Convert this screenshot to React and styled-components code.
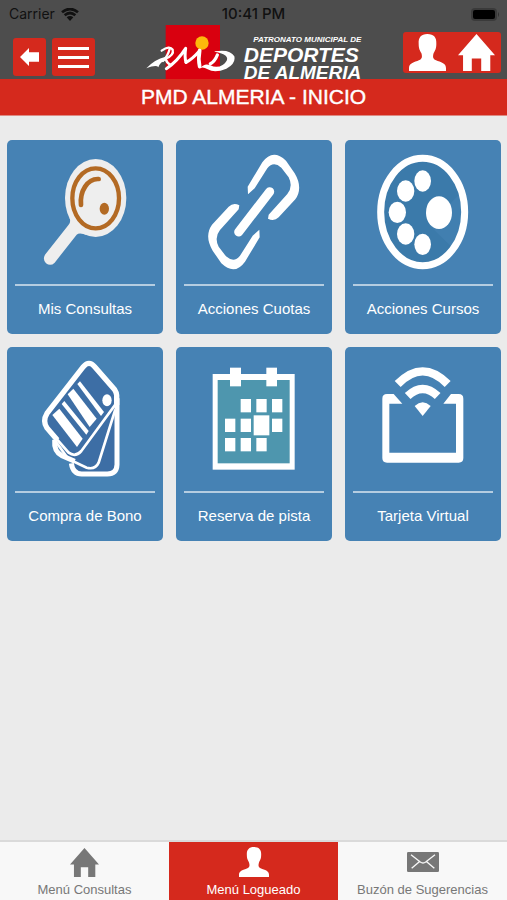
import styled, { createGlobalStyle, ThemeProvider } from "styled-components";

const theme = {
  red: "#d5291d",
  dark: "#4d4d4d",
  blue: "#4682b4",
  page: "#ebebeb",
  bar: "#f8f8f8",
  gray: "#777777",
};

const GlobalStyle = createGlobalStyle`
  * {
    box-sizing: border-box;
  }
  body {
    margin: 0;
    font-family: "Liberation Sans", Arial, sans-serif;
  }
`;

const Screen = styled.div`
  display: flex;
  flex-direction: column;
  min-height: 100vh;
  background: ${({ theme }) => theme.page};
`;

const StatusBar = styled.div`
  display: grid;
  grid-template-columns: 1fr auto 1fr;
  align-items: center;
  height: 25px;
  padding: 3px 6px 0 6px;
  background: ${({ theme }) => theme.dark};
  color: #111;
  font-family: Inter, "Liberation Sans", sans-serif;
  font-size: 14px;
  line-height: 20px;
`;

const Carrier = styled.div`
  display: flex;
  align-items: center;
  gap: 6px;
  padding-left: 3px;
`;

const Clock = styled.div`
  font-size: 15px;
  font-weight: 500;
`;

const Battery = styled.svg`
  justify-self: end;
`;

const Toolbar = styled.header`
  display: grid;
  grid-template-columns: 1fr auto 1fr;
  height: 54px;
  padding: 0 6px;
  background: ${({ theme }) => theme.dark};
`;

const LeftButtons = styled.div`
  display: flex;
  align-items: flex-start;
  gap: 6px;
  padding: 13px 0 0 7px;
`;

const RightButtons = styled.div`
  display: flex;
  align-items: flex-start;
  justify-content: flex-end;
  padding-top: 7px;
`;

const IconButton = styled.button`
  display: flex;
  align-items: center;
  justify-content: center;
  width: ${({ $width }) => $width}px;
  height: ${({ $height }) => $height}px;
  padding: 0;
  border: 0;
  border-radius: ${({ $radius }) => $radius || "3px"};
  background: ${({ theme }) => theme.red};
  color: #fff;
  cursor: pointer;
`;

const Logo = styled.div`
  display: flex;
  gap: 9px;
`;

const LogoText = styled.div`
  display: flex;
  flex-direction: column;
  padding-top: 10px;
  color: #fff;
  font-style: italic;
  font-weight: 700;
  white-space: nowrap;
`;

const LogoSmall = styled.span`
  padding-bottom: 2px;
  font-size: 8px;
  line-height: 9px;
  text-align: right;
`;

const LogoBig = styled.span`
  font-size: ${({ $size }) => $size}px;
  line-height: 18px;
`;

const Title = styled.h1`
  margin: 0;
  border-bottom: 1px solid #dd8a83;
  background: ${({ theme }) => theme.red};
  color: #fff;
  font-size: 21px;
  font-weight: 400;
  line-height: 36px;
  text-align: center;
  -webkit-text-stroke: 0.4px #fff;
`;

const Content = styled.main`
  flex: 1;
  padding: 24px 6px 24px 7px;
`;

const TileGrid = styled.div`
  display: grid;
  grid-template-columns: repeat(3, 1fr);
  gap: 13px;
`;

const Tile = styled.a`
  display: flex;
  flex-direction: column;
  padding: 8px 8px 15px;
  border-radius: 5px;
  background: ${({ theme }) => theme.blue};
  color: #fff;
  text-decoration: none;
`;

const TileIcon = styled.svg`
  display: block;
  width: 100%;
  height: 136px;
`;

const TileLabel = styled.span`
  padding-top: 12px;
  border-top: 2px solid #b5cde1;
  font-size: 15px;
  line-height: 21px;
  text-align: center;
`;

const TabBar = styled.nav`
  display: grid;
  grid-template-columns: repeat(3, 1fr);
  border-top: 2px solid #dadada;
  background: ${({ theme }) => theme.bar};
`;

const Tab = styled.a`
  display: flex;
  flex-direction: column;
  align-items: center;
  gap: 4px;
  padding: 5px 0 1px;
  background: ${({ $active, theme }) => ($active ? theme.red : "transparent")};
  color: ${({ $active, theme }) => ($active ? "#fff" : theme.gray)};
  font-size: 13px;
  line-height: 18px;
  text-decoration: none;
  white-space: nowrap;
`;

const TabIcon = styled.span`
  display: flex;
  align-items: center;
  height: 30px;
`;

// Iconos
const HouseIcon = ({ size }) => (
  <svg width={size} height={size} viewBox="615 102 110 110" aria-hidden="true">
    <path
      fill="currentColor"
      d="M670 102 L725 165 H711 V212 H684 V175 H656 V212 H630 V165 H615 Z"
    />
  </svg>
);

const PersonIcon = ({ size }) => (
  <svg width={size} height={size} viewBox="468 101 111 111" aria-hidden="true">
    <path
      fill="currentColor"
      d="M523 101 C543 101 551 112 550 130 C550 146 546 150 542 158 C538 172 540 177 554 182 C570 187 579 191 579 204 V212 H468 V204 C468 191 477 187 493 182 C507 177 509 172 505 158 C501 150 497 146 497 130 C496 112 504 101 523 101 Z"
    />
  </svg>
);

const MailIcon = () => (
  <svg width="32" height="20" viewBox="0 0 96 60" aria-hidden="true">
    <rect width="96" height="60" rx="4" fill="currentColor" />
    <path
      d="M12 8 L40 30 Q48 36 56 30 L84 8 M14 49 L37 29 M82 49 L59 29"
      fill="none"
      stroke="#f8f8f8"
      strokeWidth="4"
    />
  </svg>
);

const ArrowIcon = () => (
  <svg width="19" height="18" viewBox="61 146 57 54" aria-hidden="true">
    <path
      fill="currentColor"
      d="M61 173 L88 146 V159 H118 V187 H88 V200 Z"
    />
  </svg>
);

const MenuIcon = () => (
  <svg width="31" height="21" viewBox="0 0 31 21" aria-hidden="true">
    <path
      d="M0 1.5 H31 M0 10.5 H31 M0 19.5 H31"
      stroke="currentColor"
      strokeWidth="3"
    />
  </svg>
);

const WifiIcon = () => (
  <svg width="18" height="13" viewBox="0 0 54 39" aria-hidden="true">
    <path
      d="M3 13 Q27 -7 51 13 M11 22 Q27 8 43 22"
      fill="none"
      stroke="#111"
      strokeWidth="8"
    />
    <path d="M17 28 Q27 20 37 28 L27 39 Z" fill="#111" />
  </svg>
);

const LogoMark = () => (
  <svg width="89" height="54" viewBox="33 16 267 162" aria-hidden="true">
    <rect x="92" y="16" width="163" height="162" fill="#d9000f" />
    <circle cx="201" cy="70" r="20" fill="#fdb90b" />
    <g fill="none" stroke="#fff" strokeLinecap="round" strokeLinejoin="round">
      <path d="M104 88 Q98 110 84 124" strokeWidth="7" />
      <path d="M80 93 Q104 76 113 90 Q118 108 90 118" strokeWidth="7" />
      <path d="M92 119 Q96 130 106 136" strokeWidth="8" />
      <path d="M94 147 Q128 124 152 86 Q148 112 153 128" strokeWidth="9" />
      <path d="M153 128 Q172 118 194 93" strokeWidth="9" />
      <path d="M194 93 Q189 118 194 141" strokeWidth="11" />
      <path d="M247 106 Q239 126 226 132" strokeWidth="10" />
    </g>
    <path
      fill="#fff"
      d="M34 146 Q58 119 92 111 L93 121 Q75 127 70 143 Q65 134 34 146 Z"
    />
    <path
      fill="#fff"
      d="M239 95 Q285 87 298 110 Q303 132 274 147 Q240 161 218 149 Q204 140 196 145 Q209 129 226 137 Q246 147 264 135 Q284 119 272 108 Q263 100 239 96 Z"
    />
  </svg>
);

const SearchDrawing = () => (
  <>
    <path
      d="M208 262 Q214 274 206 284 L135 374 Q127 388 138 400 Q152 410 164 398 L230 314 Q238 306 262 316 Z"
      fill="#eeeeee"
    />
    <ellipse cx="287" cy="204" rx="92" ry="117" fill="#eeeeee" />
    <g fill="none" stroke="#b36a24">
      <ellipse cx="287" cy="205" rx="70" ry="90" strokeWidth="13" />
      <path
        d="M243 225 C239 184 262 145 296 147"
        strokeWidth="14"
        strokeLinecap="round"
      />
    </g>
    <ellipse cx="313" cy="236" rx="14" ry="18" fill="#b36a24" />
  </>
);

const linkHalf =
  "M234 193 L233 170 L277 97 Q308 54 348 92 L374 130 Q400 174 376 208 L326 262 Q312 275 294 266 L296 254 L352 192 Q370 170 356 142 L334 113 Q310 92 292 115 L254 175 Z";

const LinkDrawing = () => (
  <>
    <path d={linkHalf} fill="#fff" />
    <path d={linkHalf} fill="#fff" transform="rotate(180 251 246)" />
    <path
      d="M299 185 L206 306"
      stroke="#fff"
      strokeWidth="27"
      strokeLinecap="round"
    />
  </>
);

const PaletteDrawing = () => (
  <>
    <ellipse cx="257" cy="246" rx="126" ry="161" fill="#3b7aaa" />
    <path d="M276 285 L345 352 L385 290 L380 180 L345 215 Z" fill="#417fb0" />
    <ellipse
      cx="257"
      cy="246"
      rx="126"
      ry="161"
      fill="none"
      stroke="#fff"
      strokeWidth="21"
    />
    <g fill="#fff">
      <ellipse cx="257" cy="153" rx="25" ry="32" />
      <ellipse cx="206" cy="183" rx="26" ry="32" />
      <ellipse cx="181" cy="247" rx="26" ry="32" />
      <ellipse cx="206" cy="312" rx="26" ry="32" />
      <ellipse cx="257" cy="343" rx="25" ry="32" />
      <ellipse cx="306" cy="248" rx="39" ry="49" />
    </g>
  </>
);

const CardsDrawing = () => (
  <>
    <g fill="#3d6ea5" stroke="#fff">
      <path
        d="M351 175 V374 Q350 402 322 402 H245 Q219 402 214 370"
        strokeWidth="15"
      />
      <path
        d="M346 208 L296 368 Q286 390 260 383 L205 357 L164 300"
        strokeWidth="8"
      />
      <path
        d="M164 300 Q161 335 186 347 L224 364"
        fill="none"
        strokeWidth="15"
      />
      <path
        d="M250 78 Q267 60 284 78 L344 146 Q357 166 345 195 L244 333 Q226 353 206 338 L141 264 Q127 244 141 220 Z"
        strokeWidth="8"
      />
      <path
        d="M350 195 V166 Q350 158 344 149 L284 80 Q267 60 250 80 L141 220 Q127 243 141 264 L172 300"
        fill="none"
        strokeWidth="16"
      />
    </g>
    <g fill="#fff">
      <path d="M157 225 L178 206 L248 296 L231 321 Z" />
      <path d="M185 192 L193 183 L266 273 L259 284 Z" />
      <path d="M203 163 L220 146 L290 236 L269 261 Z" />
      <path d="M232 132 L240 124 L312 216 L303 228 Z" />
      <ellipse cx="321" cy="181" rx="14" ry="18" />
    </g>
  </>
);

const calendarDays = [
  [212, 177],
  [259, 177],
  [306, 177],
  [165, 236],
  [212, 236],
  [306, 236],
  [165, 294],
  [212, 294],
  [259, 294],
];

const CalendarDrawing = () => (
  <>
    <rect x="128" y="102" width="246" height="287" fill="#fff" />
    <rect x="143" y="120" width="216" height="250" fill="#4e96ae" />
    <g fill="#fff">
      <rect x="180" y="83" width="33" height="56" />
      <rect x="289" y="83" width="32" height="56" />
      {calendarDays.map(([x, y]) => (
        <rect key={`${x}-${y}`} x={x} y={y} width="31" height="40" />
      ))}
      <rect x="251" y="226" width="47" height="60" />
    </g>
  </>
);

const VirtualCardDrawing = () => (
  <>
    <path
      fill="#fff"
      d="M150 162 H170 L196 191 H157 V338 H357 V191 H319 L342 162 H365 Q379 162 379 176 V354 Q379 368 365 368 H150 Q136 368 136 354 V176 Q136 162 150 162 Z"
    />
    <path
      d="M182 132 Q257 56 332 132 M212 168 Q257 126 302 168"
      fill="none"
      stroke="#fff"
      strokeWidth="25"
    />
    <path d="M233 198 Q257 176 281 198 L257 228 Z" fill="#fff" />
  </>
);

const tiles = [
  { label: "Mis Consultas", viewBox: "45 54 420 408", Drawing: SearchDrawing },
  { label: "Acciones Cuotas", viewBox: "42 54 420 408", Drawing: LinkDrawing },
  { label: "Acciones Cursos", viewBox: "48 54 420 408", Drawing: PaletteDrawing },
  { label: "Compra de Bono", viewBox: "45 45 420 408", Drawing: CardsDrawing },
  { label: "Reserva de pista", viewBox: "42 45 420 408", Drawing: CalendarDrawing },
  { label: "Tarjeta Virtual", viewBox: "48 45 420 408", Drawing: VirtualCardDrawing },
];

function App() {
  return (
    <ThemeProvider theme={theme}>
      <GlobalStyle />
      <Screen>
        <StatusBar>
          <Carrier>
            Carrier
            <WifiIcon />
          </Carrier>
          <Clock>10:41 PM</Clock>
          <Battery width="31" height="13" viewBox="0 0 31 13">
            <rect x="1" y="0" width="26" height="13" rx="4" fill="#3a3a3a" />
            <rect x="3" y="2" width="22" height="9" rx="2" fill="#000" />
            <path d="M28 4 Q30 6.5 28 9 Z" fill="#2f2f2f" />
          </Battery>
        </StatusBar>

        <Toolbar>
          <LeftButtons>
            <IconButton $width={33} $height={38} aria-label="Volver">
              <ArrowIcon />
            </IconButton>
            <IconButton $width={43} $height={38} aria-label="Menú">
              <MenuIcon />
            </IconButton>
          </LeftButtons>
          <Logo>
            <LogoMark />
            <LogoText>
              <LogoSmall>PATRONATO MUNICIPAL DE</LogoSmall>
              <LogoBig $size={21}>DEPORTES</LogoBig>
              <LogoBig $size={19}>DE ALMERIA</LogoBig>
            </LogoText>
          </Logo>
          <RightButtons>
            <IconButton
              $width={49}
              $height={41}
              $radius="3px 0 0 3px"
              aria-label="Usuario"
            >
              <PersonIcon size={37} />
            </IconButton>
            <IconButton
              $width={49}
              $height={41}
              $radius="0 3px 3px 0"
              aria-label="Inicio"
            >
              <HouseIcon size={37} />
            </IconButton>
          </RightButtons>
        </Toolbar>
        <Title>PMD ALMERIA - INICIO</Title>

        <Content>
          <TileGrid>
            {tiles.map(({ label, viewBox, Drawing }) => (
              <Tile key={label} href="#">
                <TileIcon viewBox={viewBox} aria-hidden="true">
                  <Drawing />
                </TileIcon>
                <TileLabel>{label}</TileLabel>
              </Tile>
            ))}
          </TileGrid>
        </Content>

        <TabBar>
          <Tab href="#">
            <TabIcon>
              <HouseIcon size={29} />
            </TabIcon>
            Menú Consultas
          </Tab>
          <Tab href="#" $active>
            <TabIcon>
              <PersonIcon size={30} />
            </TabIcon>
            Menú Logueado
          </Tab>
          <Tab href="#">
            <TabIcon>
              <MailIcon />
            </TabIcon>
            Buzón de Sugerencias
          </Tab>
        </TabBar>
      </Screen>
    </ThemeProvider>
  );
}

export default App;
